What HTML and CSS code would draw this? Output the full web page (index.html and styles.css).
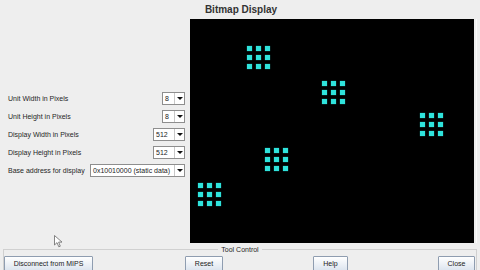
FILE: index.html
```html
<!DOCTYPE html>
<html>
<head>
<meta charset="utf-8">
<link rel="stylesheet" href="styles.css">
</head>
<body>
<div class="app">
  <div class="title">Bitmap Display</div>
  <div class="main">
    <div class="side">
      <div class="form">
        <div class="row"><span class="lbl">Unit Width in Pixels</span><div class="combo w-s"><span class="val">8</span><span class="arr"></span></div></div>
        <div class="row"><span class="lbl">Unit Height in Pixels</span><div class="combo w-s"><span class="val">8</span><span class="arr"></span></div></div>
        <div class="row"><span class="lbl">Display Width in Pixels</span><div class="combo w-m"><span class="val">512</span><span class="arr"></span></div></div>
        <div class="row"><span class="lbl">Display Height in Pixels</span><div class="combo w-m"><span class="val">512</span><span class="arr"></span></div></div>
        <div class="row"><span class="lbl">Base address for display</span><div class="combo w-l"><span class="val">0x10010000 (static data)</span><span class="arr"></span></div></div>
      </div>
    </div>
    <div class="canvas">
      <div class="grp" style="left:57px;top:27px"><i></i><i></i><i></i><i></i><i></i><i></i><i></i><i></i><i></i></div>
      <div class="grp" style="left:132px;top:62px"><i></i><i></i><i></i><i></i><i></i><i></i><i></i><i></i><i></i></div>
      <div class="grp" style="left:230px;top:94px"><i></i><i></i><i></i><i></i><i></i><i></i><i></i><i></i><i></i></div>
      <div class="grp" style="left:75px;top:129px"><i></i><i></i><i></i><i></i><i></i><i></i><i></i><i></i><i></i></div>
      <div class="grp" style="left:8px;top:164px"><i></i><i></i><i></i><i></i><i></i><i></i><i></i><i></i><i></i></div>
    </div>
    <div class="edge"></div>
  </div>
  <fieldset class="tool">
    <legend>Tool Control</legend>
    <div class="btns">
      <button class="btn b-disc">Disconnect from MIPS</button>
      <button class="btn b-reset">Reset</button>
      <button class="btn b-help">Help</button>
      <button class="btn b-close">Close</button>
    </div>
  </fieldset>
  <svg class="cursor" width="9" height="13" viewBox="0 0 9 13"><path d="M0.5 0.5 L0.5 10 L3 7.6 L4.8 11.8 L6.3 11.2 L4.6 7.1 L8 7.1 Z" fill="#fff" stroke="#666" stroke-width="0.8"/></svg>
</div>
</body>
</html>
```
FILE: styles.css
```css
* { box-sizing: border-box; }
html, body { margin: 0; padding: 0; }
body {
  width: 480px;
  height: 270px;
  overflow: hidden;
  background: #eeeeee;
  font-family: "Liberation Sans", Arial, sans-serif;
  color: #333;
}
.app {
  position: relative;
  width: 480px;
  height: 270px;
  display: flex;
  flex-direction: column;
}
.title {
  height: 20px;
  line-height: 19px;
  text-align: center;
  font-size: 10px;
  font-weight: bold;
  color: #333;
  padding-left: 2px;
}
.main {
  height: 224px;
  display: flex;
}
.side {
  width: 190px;
  padding-top: 73px;
  padding-right: 5px;
}
.form {
  display: flex;
  flex-direction: column;
  gap: 5px;
}
.row {
  height: 13px;
  display: flex;
  align-items: center;
  justify-content: space-between;
  padding-left: 8px;
}
.lbl {
  font-size: 7px;
  color: #262626;
  white-space: nowrap;
}
.combo {
  height: 13px;
  display: flex;
  background: #fff;
  border: 1px solid #8e8e8e;
}
.w-s { width: 23px; }
.w-m { width: 32px; }
.w-l { width: 95px; }
.val {
  flex: 1;
  font-size: 7px;
  line-height: 11px;
  padding-left: 2px;
  color: #222;
  white-space: nowrap;
  overflow: hidden;
}
.arr {
  width: 10px;
  border-left: 1px solid #c8c8c8;
  display: flex;
  align-items: center;
  justify-content: center;
}
.arr::after {
  content: "";
  border-left: 3px solid transparent;
  border-right: 3px solid transparent;
  border-top: 3px solid #111;
}
.canvas {
  position: relative;
  width: 284px;
  height: 224px;
  background: #000;
}
.edge {
  width: 1px;
  margin-left: 2px;
  background: #fafafa;
}
.grp {
  position: absolute;
  width: 23px;
  height: 23px;
  display: grid;
  grid-template-columns: repeat(3, 5px);
  grid-template-rows: repeat(3, 5px);
  gap: 4px;
}
.grp i {
  background: #2fe3dc;
  box-shadow: 0 0 1px #1a9a96;
}
.tool {
  margin: 2px 3px 0 3px;
  padding: 0;
  border: 1px solid #d0d0d0;
  border-bottom: none;
  height: 30px;
  min-width: 0;
}
.tool legend {
  margin: 0 auto;
  padding: 0 3px;
  font-size: 7px;
  color: #262626;
  line-height: 9px;
}
.btns {
  position: relative;
  height: 20px;
}
.btn {
  position: absolute;
  top: 2px;
  height: 15px;
  padding: 0;
  font-family: "Liberation Sans", Arial, sans-serif;
  font-size: 7px;
  color: #222;
  border: 1px solid #8f9db0;
  border-radius: 1px;
  background: linear-gradient(#ffffff, #dde5ef);
}
.b-disc { left: 0px; width: 89px; }
.b-reset { left: 181px; width: 38px; }
.b-help { left: 309px; width: 35px; }
.b-close { left: 434px; width: 37px; }
.cursor {
  position: absolute;
  left: 54px;
  top: 235px;
}
```
